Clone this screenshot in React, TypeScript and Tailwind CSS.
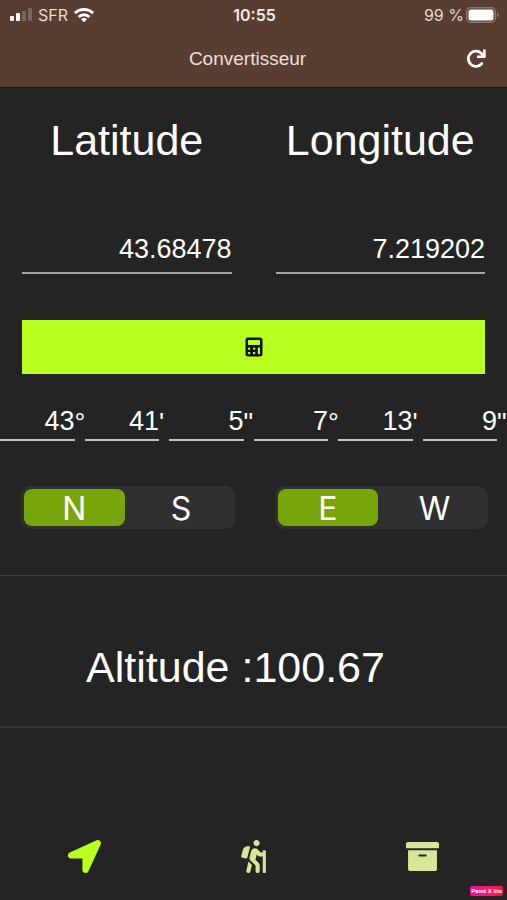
import { useState } from "react";
import { FaArchive, FaHiking, FaLocationArrow } from "react-icons/fa";

type Segment = { name: string; label: string; options: string[] };

const dms = [
  { id: "lat-deg", label: "Latitude degrés", value: "43", unit: "°" },
  { id: "lat-min", label: "Latitude minutes", value: "41", unit: "'" },
  { id: "lat-sec", label: "Latitude secondes", value: "5", unit: '"' },
  { id: "lon-deg", label: "Longitude degrés", value: "7", unit: "°" },
  { id: "lon-min", label: "Longitude minutes", value: "13", unit: "'" },
  { id: "lon-sec", label: "Longitude secondes", value: "9", unit: '"' },
];

function StatusBar() {
  return (
    <div className="grid h-[30px] grid-cols-3 items-center pr-2 pl-[10px] text-[16px] leading-5 text-[#e3d8d2]">
      <div className="flex items-center gap-[6px]">
        <svg width="22" height="14" viewBox="0 0 22 14" aria-hidden="true">
          <rect x="0" y="8" width="4" height="5" rx="1" fill="#fff" />
          <rect x="6" y="5" width="4" height="8" rx="1" fill="#fff" />
          <rect x="12" y="3" width="4" height="10" rx="1" fill="#7c655b" />
          <rect x="18" y="0" width="4" height="13" rx="1" fill="#7c655b" />
        </svg>
        <span>SFR</span>
        <svg width="20" height="16" viewBox="0 0 20 16" fill="none" stroke="#fff" strokeWidth="3" aria-hidden="true">
          <path d="M1 6.2a12.8 12.8 0 0 1 18 0" />
          <path d="M4.6 10a7.7 7.7 0 0 1 10.8 0" />
          <path d="M10 15.2 7 12.2a4.2 4.2 0 0 1 6 0Z" fill="#fff" stroke="none" />
        </svg>
      </div>
      <span className="text-center font-semibold text-[#f3ebe7]">10:55</span>
      <div className="flex items-center justify-end gap-[2px]">
        <span>99 %</span>
        <svg width="33" height="16" viewBox="0 0 33 16" aria-hidden="true">
          <rect x="0.75" y="0.75" width="28.5" height="14.5" rx="4" fill="none" stroke="#8d776d" strokeWidth="1.5" />
          <rect x="2.5" y="2.5" width="25" height="11" rx="2.5" fill="#fff" />
          <path d="M31 5.5c2 .8 2 4.2 0 5Z" fill="#8d776d" />
        </svg>
      </div>
    </div>
  );
}

function Coordinate({ id, label, value }: { id: string; label: string; value: string }) {
  return (
    <div className="px-[22px]">
      <label htmlFor={id} className="block text-center text-[43px] leading-[50px]">
        {label}
      </label>
      <input
        id={id}
        defaultValue={value}
        inputMode="decimal"
        className="mt-[62px] block h-[47px] w-full border-b-2 border-[#a3a3a3] bg-transparent text-right text-[27px] outline-none"
      />
    </div>
  );
}

function Segmented({ name, label, options }: Segment) {
  const [selected, setSelected] = useState(options[0]);
  return (
    <div
      role="radiogroup"
      aria-label={label}
      className="mr-[19px] ml-[21px] flex h-[43px] gap-[6px] rounded-[10px] bg-[#303032] p-[3px]"
    >
      {options.map((option) => (
        <label
          key={option}
          className="relative flex flex-1 cursor-pointer items-center justify-center rounded-[8px] pt-[2px] font-[Inter,sans-serif] text-[32px] leading-9 has-checked:bg-[#78a60a]"
        >
          <input
            type="radio"
            name={name}
            value={option}
            checked={selected === option}
            onChange={() => setSelected(option)}
            className="absolute inset-0 cursor-pointer appearance-none"
          />
          {option}
        </label>
      ))}
    </div>
  );
}

export default function App() {
  return (
    <div className="relative flex min-h-screen flex-col overflow-hidden bg-[#242424] font-['Liberation_Sans',Arial,sans-serif] text-white">
      <header className="border-b border-[#161616] bg-[#593d31]">
        <div className="font-[Inter,sans-serif]">
          <StatusBar />
        </div>
        <div className="grid h-[57px] grid-cols-[1fr_auto_1fr] items-center pr-[21px] pl-[9px]">
          <h1 className="col-start-2 text-[19px] leading-6 text-[#ede1db]">Convertisseur</h1>
          <button type="button" aria-label="Actualiser" className="justify-self-end">
            <svg width="20" height="22" viewBox="0 0 20 22" fill="none" aria-hidden="true">
              <path d="M15.8 15.6A7.6 7.6 0 1 1 15.2 5.2L17 7.5" stroke="#fff" strokeWidth="2.8" strokeLinecap="round" />
              <path d="M18.4 1.6v7.2H11" stroke="#fff" strokeWidth="2.6" strokeLinejoin="round" />
            </svg>
          </button>
        </div>
      </header>

      <main className="flex-1">
        <section className="grid grid-cols-2 pt-[27px]">
          <Coordinate id="latitude" label="Latitude" value="43.68478" />
          <Coordinate id="longitude" label="Longitude" value="7.219202" />
        </section>

        <div className="px-[22px] pt-[46px]">
          <button type="button" aria-label="Convertir" className="flex h-[54px] w-full items-center justify-center bg-[#b9ff1f]">
            <svg width="18" height="20" viewBox="0 0 18 20" aria-hidden="true">
              <rect x="0.5" y="0.5" width="17" height="19" rx="2.5" fill="#0c1000" />
              <g fill="#b9ff1f">
                <rect x="3" y="3" width="12" height="5" rx="0.5" />
                <rect x="3" y="10.5" width="2.2" height="2.2" rx="0.6" />
                <rect x="8" y="10.5" width="2.2" height="2.2" rx="0.6" />
                <rect x="3" y="15" width="2.2" height="2.2" rx="0.6" />
                <rect x="8" y="15" width="2.2" height="2.2" rx="0.6" />
                <rect x="12.8" y="10.5" width="2.2" height="6.7" rx="0.6" />
              </g>
            </svg>
          </button>
        </div>

        <section className="grid grid-cols-6 pt-[26px]">
          {dms.map(({ id, label, value, unit }) => (
            <div key={id} className="flex">
              <input
                id={id}
                defaultValue={value}
                inputMode="numeric"
                className="h-[41px] min-w-0 flex-1 border-b-2 border-[#c4c4c4] bg-transparent pt-[3px] text-right text-[27px] outline-none"
              />
              <label htmlFor={id} aria-label={label} className="w-[10px] pt-[5px] text-[27px] leading-9 whitespace-nowrap">
                {unit}
              </label>
            </div>
          ))}
        </section>

        <section className="grid grid-cols-2 pt-[45px] pb-[46px]">
          <Segmented name="ns" label="Hémisphère" options={["N", "S"]} />
          <Segmented name="ew" label="Orientation" options={["E", "W"]} />
        </section>

        <section className="border-t border-b-2 border-t-[#3d3d3d] border-b-[#343434] pt-[66px] pr-9 pb-[34px]">
          <p className="text-center text-[43px] leading-[50px] whitespace-nowrap">Altitude :100.67</p>
        </section>
      </main>

      <nav className="grid h-[88px] grid-cols-3 items-center text-[#d6e69a]">
        <a href="#position" aria-label="Position" className="flex justify-center text-[#b9ff1f]">
          <FaLocationArrow size={33} />
        </a>
        <a href="#randonnee" aria-label="Randonnée" className="flex justify-center">
          <FaHiking size={33} />
        </a>
        <a href="#archives" aria-label="Archives" className="flex justify-center">
          <FaArchive size={33} />
        </a>
      </nav>

      <span className="absolute right-1 bottom-1 rounded-[2px] bg-linear-to-r from-[#f0089a] to-[#fb1440] px-px text-[6px] leading-[10px] font-bold">
        Paint X lite
      </span>
    </div>
  );
}
